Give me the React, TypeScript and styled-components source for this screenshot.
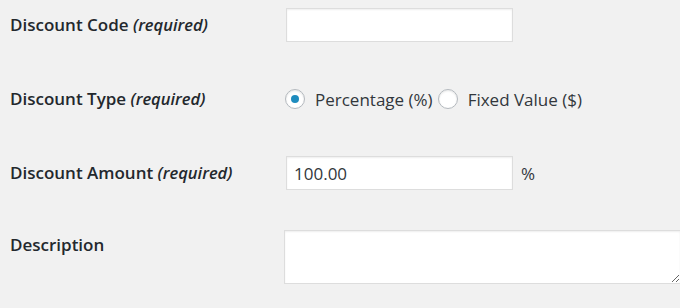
import styled, { createGlobalStyle } from "styled-components";

const GlobalStyle = createGlobalStyle`
  html, body {
    margin: 0;
    padding: 0;
    background: #f1f1f1;
    overflow: hidden;
  }
  body {
    font-family: "Open Sans", "Liberation Sans", sans-serif;
    color: #23282d;
  }
`;

const Form = styled.div`
  display: flex;
  flex-direction: column;
  gap: 24px;
  padding-left: 10px;
`;

const Row = styled.div<{ $top?: boolean }>`
  display: grid;
  grid-template-columns: 276px 1fr;
  align-items: ${(p) => (p.$top ? "start" : "center")};
  min-height: 50px;
`;

const Label = styled.div<{ $offset?: number }>`
  font-size: 17px;
  font-weight: 600;
  line-height: 22px;
  margin-top: ${(p) => p.$offset ?? 0}px;

  em {
    font-style: italic;
    font-size: 16.5px;
  }
`;

const Field = styled.div`
  display: flex;
  align-items: center;
  gap: 8px;
  font-size: 17px;
  color: #32373c;
`;

const TextInput = styled.input`
  box-sizing: border-box;
  width: 227px;
  height: 34px;
  padding: 0 7px;
  margin: 0;
  border: 1px solid #ddd;
  box-shadow: inset 0 1px 2px rgba(0, 0, 0, 0.07);
  background: #fff;
  font-family: inherit;
  font-size: 17px;
  color: #32373c;
  outline: none;
`;

const Unit = styled.span`
  font-size: 17px;
  color: #32373c;
`;

const RadioGroup = styled.div`
  display: flex;
  align-items: center;
  font-size: 17px;
  color: #32373c;
  margin-left: -1px;
`;

const RadioLabel = styled.label`
  display: flex;
  align-items: center;
  gap: 10px;
  margin-right: 5px;
  cursor: pointer;
`;

const RadioCircle = styled.span<{ $checked?: boolean }>`
  box-sizing: border-box;
  width: 20px;
  height: 20px;
  border-radius: 50%;
  border: 1px solid #b4b9be;
  background: #fff;
  box-shadow: inset 0 1px 2px rgba(0, 0, 0, 0.1);
  display: flex;
  align-items: center;
  justify-content: center;

  &::after {
    content: "";
    display: ${(p) => (p.$checked ? "block" : "none")};
    width: 8px;
    height: 8px;
    border-radius: 50%;
    background: #1e8cbe;
  }
`;

const TextArea = styled.textarea`
  box-sizing: border-box;
  width: 397px;
  height: 54px;
  margin: 8px 0 0 -2px;
  border: 1px solid #ddd;
  box-shadow: inset 0 1px 2px rgba(0, 0, 0, 0.07);
  background: #fff;
  font-family: inherit;
  font-size: 17px;
  outline: none;
  display: block;
`;

const App = () => {
  return (
    <>
      <GlobalStyle />
      <Form>
        <Row>
          <Label>
            Discount Code <em>(required)</em>
          </Label>
          <Field>
            <TextInput type="text" defaultValue="" />
          </Field>
        </Row>
        <Row>
          <Label>
            Discount Type <em>(required)</em>
          </Label>
          <RadioGroup>
            <RadioLabel>
              <RadioCircle $checked />
              Percentage (%)
            </RadioLabel>
            <RadioLabel>
              <RadioCircle />
              Fixed Value ($)
            </RadioLabel>
          </RadioGroup>
        </Row>
        <Row>
          <Label>
            Discount Amount <em>(required)</em>
          </Label>
          <Field>
            <TextInput type="text" defaultValue="100.00" />
            <Unit>%</Unit>
          </Field>
        </Row>
        <Row $top>
          <Label $offset={12}>Description</Label>
          <TextArea />
        </Row>
      </Form>
    </>
  );
};

export default App;
